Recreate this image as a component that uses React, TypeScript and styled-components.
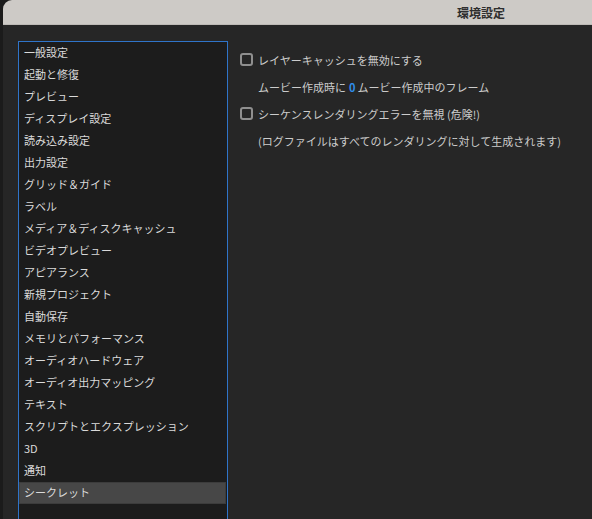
import React from 'react';
import styled, { createGlobalStyle } from 'styled-components';

const GlobalStyle = createGlobalStyle`
  html, body {
    margin: 0;
    padding: 0;
    background: #1b1b1b;
    overflow: hidden;
  }
  body {
    font-family: "Noto Sans CJK JP", "Noto Sans", sans-serif;
  }
`;

const Screen = styled.div`
  height: 519px;
  padding-left: 3px;
  display: flex;
`;

const Window = styled.div`
  flex: 1;
  display: flex;
  flex-direction: column;
  background: #262626;
  border-top-left-radius: 9px;
  overflow: hidden;
`;

const TitleBar = styled.div`
  height: 25px;
  flex-shrink: 0;
  background: #cdcac6;
  border-bottom: 1px solid #bdbab6;
  box-sizing: border-box;
  display: flex;
  align-items: center;
  justify-content: flex-end;
  padding-right: 87px;
`;

const Title = styled.span`
  font-size: 12px;
  font-weight: 700;
  color: #2e2e2e;
`;

const Body = styled.div`
  flex: 1;
  display: flex;
  gap: 12px;
  padding: 16px 0 0 15px;
  min-height: 0;
`;

const CategoryList = styled.ul`
  list-style: none;
  margin: 0;
  padding: 0;
  width: 210px;
  box-sizing: border-box;
  background: #1c1c1c;
  border: 1px solid #2f74c9;
  border-bottom: none;
  flex-shrink: 0;
`;

const CategoryItem = styled.li<{ $selected?: boolean }>`
  height: 22px;
  margin-right: 1px;
  padding: 0 0 2px 5px;
  box-sizing: border-box;
  display: flex;
  align-items: center;
  font-size: 11px;
  color: #dadada;
  white-space: nowrap;
  background: ${(p) => (p.$selected ? '#474747' : 'transparent')};
  box-shadow: ${(p) => (p.$selected ? 'inset 0 0 0 1px #3c3c3c' : 'none')};
`;

const Panel = styled.div`
  display: flex;
  flex-direction: column;
  padding-top: 5px;
`;

const Row = styled.div<{ $indent?: boolean }>`
  height: 27px;
  display: flex;
  align-items: center;
  gap: 5px;
  padding-left: ${(p) => (p.$indent ? '18px' : '0')};
  font-size: 11px;
  color: #cccccc;
  white-space: nowrap;
`;

const Checkbox = styled.span`
  width: 13px;
  height: 13px;
  box-sizing: border-box;
  border: 2px solid #8f8f8f;
  border-radius: 3px;
  background: #262626;
  flex-shrink: 0;
`;

const Value = styled.span`
  color: #2f8deb;
  font-weight: 700;
  margin: 0 2px 0 3px;
`;

const categories = [
  '一般設定',
  '起動と修復',
  'プレビュー',
  'ディスプレイ設定',
  '読み込み設定',
  '出力設定',
  'グリッド＆ガイド',
  'ラベル',
  'メディア＆ディスクキャッシュ',
  'ビデオプレビュー',
  'アピアランス',
  '新規プロジェクト',
  '自動保存',
  'メモリとパフォーマンス',
  'オーディオハードウェア',
  'オーディオ出力マッピング',
  'テキスト',
  'スクリプトとエクスプレッション',
  '3D',
  '通知',
  'シークレット',
];

const App: React.FC = () => {
  return (
    <>
      <GlobalStyle />
      <Screen>
        <Window>
          <TitleBar>
            <Title>環境設定</Title>
          </TitleBar>
          <Body>
            <CategoryList>
              {categories.map((c) => (
                <CategoryItem key={c} $selected={c === 'シークレット'}>
                  {c}
                </CategoryItem>
              ))}
            </CategoryList>
            <Panel>
              <Row>
                <Checkbox />
                レイヤーキャッシュを無効にする
              </Row>
              <Row $indent>
                <span>
                  ムービー作成時に<Value>0</Value>ムービー作成中のフレーム
                </span>
              </Row>
              <Row>
                <Checkbox />
                シーケンスレンダリングエラーを無視 (危険!)
              </Row>
              <Row $indent>(ログファイルはすべてのレンダリングに対して生成されます)</Row>
            </Panel>
          </Body>
        </Window>
      </Screen>
    </>
  );
};

export default App;
